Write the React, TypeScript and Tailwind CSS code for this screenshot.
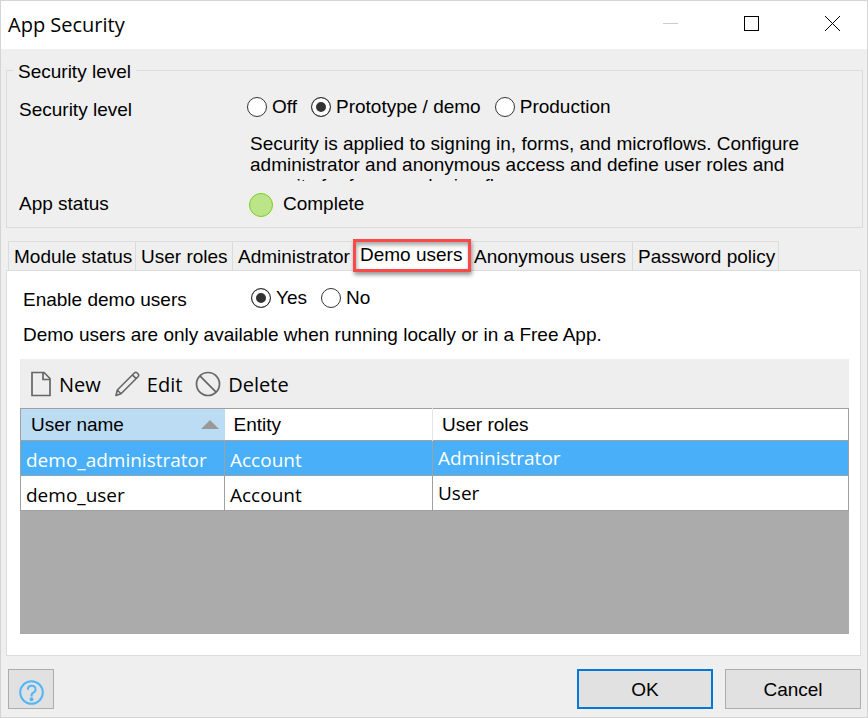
import { useState, type ReactNode } from 'react';

const sans = "font-['Liberation_Sans',Arial,sans-serif]";
const segoe = "font-['Open_Sans','Noto_Sans',sans-serif]";

function Radio({ name, label, checked, onChange }: { name: string; label: string; checked: boolean; onChange: () => void }) {
  return (
    <label className="flex items-center gap-[5px]">
      <input
        type="radio"
        name={name}
        checked={checked}
        onChange={onChange}
        className="size-5 shrink-0 appearance-none rounded-full border border-[#333] bg-white checked:bg-[#333] checked:shadow-[inset_0_0_0_4px_#fff]"
      />
      {label}
    </label>
  );
}

function ToolButton({ icon, children }: { icon: ReactNode; children: ReactNode }) {
  return (
    <button type="button" className="flex items-center gap-[7px]">
      {icon}
      <span className="pt-[2px]">{children}</span>
    </button>
  );
}

const NewIcon = () => (
  <svg width="22" height="26" viewBox="0 0 22 26" fill="none" stroke="#666" strokeWidth="1.7" aria-hidden="true">
    <path d="M2 1.500h12l6 6v17H2z M13 1.500v7h7" />
  </svg>
);

const EditIcon = () => (
  <svg width="26" height="26" viewBox="0 0 26 26" fill="none" stroke="#666" strokeWidth="1.6" strokeLinejoin="round" aria-hidden="true">
    <path d="M2 24.500l1.300-5.500L20.300 2q1.500-1.300 2.900 0l.8.8q1.300 1.400 0 2.900L7 22.700z M3.300 19l3.700 3.700 M18.400 3.900l3.700 3.700" />
  </svg>
);

const DeleteIcon = () => (
  <svg width="26" height="26" viewBox="0 0 26 26" fill="none" stroke="#666" strokeWidth="1.7" aria-hidden="true">
    <circle cx="13" cy="13" r="11.500" />
    <path d="M4.900 4.900l16.200 16.200" />
  </svg>
);

const tabs = [
  { label: 'Module status', width: 'w-[127px]' },
  { label: 'User roles', width: 'w-[97px]' },
  { label: 'Administrator', width: 'w-[121px]' },
  { label: 'Demo users', width: 'w-[115px]' },
  { label: 'Anonymous users', width: 'w-[164px]' },
  { label: 'Password policy', width: 'w-[147px]' },
];

const users = [
  { name: 'demo_administrator', entity: 'Account', roles: 'Administrator' },
  { name: 'demo_user', entity: 'Account', roles: 'User' },
];

export default function App() {
  const [level, setLevel] = useState('Prototype / demo');
  const [enabled, setEnabled] = useState('Yes');
  const [selected, setSelected] = useState(0);

  return (
    <div className={`flex min-h-screen flex-col border border-[#d4d4d4] bg-[#efefef] text-[19px] leading-[21px] text-black ${sans}`}>
      <header className={`flex h-12 shrink-0 items-center bg-white pb-[3px] pl-[7px] ${segoe}`}>
        <h1 className="flex-1 pt-[2px] text-[20px]">App Security</h1>
        <button type="button" aria-label="Minimize" className="flex w-[81px] justify-center">
          <svg width="15" height="15" viewBox="0 0 15 15" stroke="#ccc" aria-hidden="true"><path d="M0 7.500h15" /></svg>
        </button>
        <button type="button" aria-label="Maximize" className="flex w-[81px] justify-center">
          <svg width="15" height="15" viewBox="0 0 15 15" stroke="#000" fill="none" aria-hidden="true"><rect x=".5" y=".5" width="14" height="14" /></svg>
        </button>
        <button type="button" aria-label="Close" className="mr-[-6px] flex w-[81px] justify-center">
          <svg width="15" height="15" viewBox="0 0 15 15" stroke="#000" aria-hidden="true"><path d="M0 0l15 15M15 0L0 15" /></svg>
        </button>
      </header>

      <main className="flex flex-1 flex-col pt-[7px] pr-1 pl-[5px]">
        <fieldset className="border border-[#dcdcdc] pb-[10px] pl-3">
          <legend className="-ml-[6px] px-[5px] pt-1 leading-6">Security level</legend>
          <div className="flex items-start pt-[12px]">
            <span className="w-[228px] pt-[3px]">Security level</span>
            <div className="flex gap-[14px]" role="radiogroup" aria-label="Security level">
              {['Off', 'Prototype / demo', 'Production'].map((o) => (
                <Radio key={o} name="level" label={o} checked={level === o} onChange={() => setLevel(o)} />
              ))}
            </div>
          </div>
          <p className="mt-[13px] ml-[231px] h-12 max-w-[570px] overflow-hidden">
            Security is applied to signing in, forms, and microflows. Configure administrator and anonymous access and define user roles and security for forms and microflows.
          </p>
          <div className="mt-3 flex items-start">
            <span className="w-[230px]">App status</span>
            <span className="mr-[10px] size-6 rounded-full border border-[#7bcf1a] bg-[#bce589]" />
            <span>Complete</span>
          </div>
        </fieldset>

        <div className="mt-[13px] ml-[2px] flex h-[29px]" role="tablist">
          {tabs.map(({ label, width }) => {
            const active = label === 'Demo users';
            return (
              <button
                key={label}
                type="button"
                role="tab"
                aria-selected={active}
                className={`relative text-left whitespace-nowrap ${width} ${active ? 'bg-white pb-[2px] pl-[7px]' : 'border-t border-l border-[#dcdcdc] pl-[5px] last:border-r'}`}
              >
                {label}
                {active && (
                  <span className="absolute -top-[2px] -right-[3px] -bottom-[2px] left-0 z-10 border-3 border-[#f94a4a] shadow-[1px_3px_4px_rgba(0,0,0,0.4),inset_1px_3px_4px_rgba(0,0,0,0.35)]" />
                )}
              </button>
            );
          })}
        </div>

        <section className="mr-[2px] flex flex-1 flex-col border border-[#dcdcdc] bg-white px-[13px] pt-4 pb-[21px]" role="tabpanel">
          <div className="flex items-start pl-[3px]">
            <span className="w-[228px] pt-[2px]">Enable demo users</span>
            <div className="flex gap-[14px]" role="radiogroup" aria-label="Enable demo users">
              {['Yes', 'No'].map((o) => (
                <Radio key={o} name="enabled" label={o} checked={enabled === o} onChange={() => setEnabled(o)} />
              ))}
            </div>
          </div>
          <p className="mt-[14px] pl-[3px]">Demo users are only available when running locally or in a Free App.</p>

          <div className={`mt-[14px] mr-[-2px] flex h-[49px] items-center gap-[13px] bg-[#eee] pl-[10px] text-[20px] ${segoe}`}>
            <ToolButton icon={<NewIcon />}>New</ToolButton>
            <ToolButton icon={<EditIcon />}>Edit</ToolButton>
            <ToolButton icon={<DeleteIcon />}>Delete</ToolButton>
          </div>
          <div className="mr-[-2px] flex-1 bg-[#ababab]">
            <table className="w-full table-fixed border-collapse bg-white text-left">
              <colgroup>
                <col className="w-[204px]" />
                <col className="w-[208px]" />
                <col />
              </colgroup>
              <thead>
                <tr className="h-8 border border-[#a0a0a0]">
                  <th className="bg-[#bcdcf4] pr-[6px] pl-[10px] font-normal">
                    <span className="flex items-center justify-between">
                      User name
                      <svg width="18" height="9" viewBox="0 0 18 9" fill="#999" aria-hidden="true"><path d="M0 9L9 0l9 9z" /></svg>
                    </span>
                  </th>
                  <th className="border-r border-[#e5e5e5] pl-[9px] font-normal">Entity</th>
                  <th className="pl-[9px] font-normal">User roles</th>
                </tr>
              </thead>
              <tbody className={`text-[19px] ${segoe}`}>
                {users.map((u, i) => (
                  <tr
                    key={u.name}
                    onClick={() => setSelected(i)}
                    className={`h-[35px] ${selected === i ? 'bg-[#48aff8] text-white' : ''}`}
                  >
                    <td className="border border-[#a0a0a0] px-[5px] pt-1">{u.name}</td>
                    <td className="border border-[#a0a0a0] px-[5px] pt-1">{u.entity}</td>
                    <td className="border border-[#a0a0a0] px-[5px]">{u.roles}</td>
                  </tr>
                ))}
              </tbody>
            </table>
          </div>
        </section>
      </main>

      <footer className="flex gap-3 pt-[13px] pr-[6px] pb-2 pl-[7px]">
        <button type="button" aria-label="Help" className="mr-auto flex h-10 w-[46px] items-center justify-center border border-[#adadad] bg-[#e1e1e1] pt-[6px]">
          <svg width="25" height="25" viewBox="0 0 25 25" fill="none" stroke="#52b6f7" strokeWidth="2" aria-hidden="true">
            <circle cx="12.500" cy="12.500" r="11.300" />
            <path d="M8.800 9.800q0-4 3.900-4t3.900 3.700q0 2-2.200 3.200t-1.900 3.800" />
            <circle cx="12.500" cy="19.300" r="1" />
          </svg>
        </button>
        <button type="button" className="h-10 w-[136px] border-2 border-[#0078d7] bg-[#e1e1e1]">OK</button>
        <button type="button" className="h-10 w-[136px] border border-[#adadad] bg-[#e1e1e1]">Cancel</button>
      </footer>
    </div>
  );
}
